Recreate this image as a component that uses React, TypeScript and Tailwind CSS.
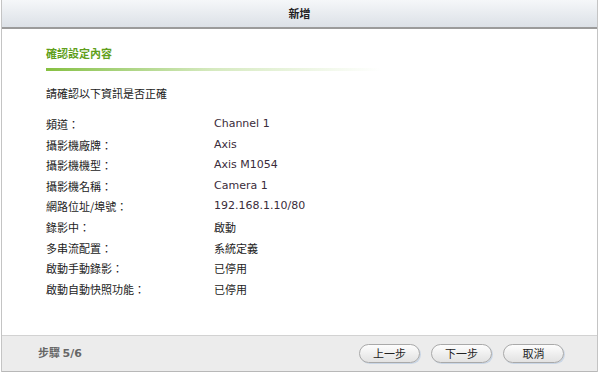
import React from "react";

const rows: [string, string, boolean][] = [
  ["頻道：", "Channel 1", true],
  ["攝影機廠牌：", "Axis", true],
  ["攝影機機型：", "Axis M1054", true],
  ["攝影機名稱：", "Camera 1", true],
  ["網路位址/埠號：", "192.168.1.10/80", true],
  ["錄影中：", "啟動", false],
  ["多串流配置：", "系統定義", false],
  ["啟動手動錄影：", "已停用", false],
  ["啟動自動快照功能：", "已停用", false],
];

const cjk = "font-['Noto_Sans_CJK_TC','Noto_Sans_CJK_SC',sans-serif]";

function PillButton({ label }: { label: string }) {
  return (
    <button
      className={`h-[19px] w-[61px] rounded-full border border-[#a9a9a9] bg-gradient-to-b from-[#fdfdfd] to-[#e2e2e2] text-[11px] leading-none text-[#222] shadow-[1px_1px_0_#c9d6e6] ${cjk}`}
    >
      {label}
    </button>
  );
}

export default function App() {
  return (
    <div className="w-[600px] h-[376px] bg-white overflow-hidden">
      <div className="ml-[1px] w-[597px] h-[372px] flex flex-col border-l border-r border-[#c4c4c4]">
        {/* Header */}
        <div className="h-[29px] shrink-0 flex items-center justify-center bg-gradient-to-b from-[#f5f7f9] to-[#dce1e7] border-b-2 border-[#9b9b9b]">
          <span className={`text-[11px] font-bold text-[#222] ${cjk}`}>新增</span>
        </div>

        {/* Body */}
        <div className="flex-1 bg-white pl-[44px] pt-[16px]">
          <div className={`text-[11px] font-bold leading-[16px] text-[#5f9f1c] ${cjk}`}>
            確認設定內容
          </div>
          <div className="mt-[7px] h-[3px] w-[335px] bg-gradient-to-r from-[#86c040] via-[#d6eac0] to-white" />
          <div className={`mt-[14px] text-[11px] leading-[16px] text-[#222] ${cjk}`}>
            請確認以下資訊是否正確
          </div>
          <div className="mt-[13px] flex flex-col">
            {rows.map(([label, value, latin]) => (
              <div key={label} className="flex h-[20.6px] items-center">
                <div className={`w-[168px] text-[11px] text-[#222] ${cjk}`}>{label}</div>
                <div
                  className={
                    latin
                      ? "text-[11px] text-[#3a2c3a] font-['DejaVu_Sans',sans-serif]"
                      : `text-[11px] text-[#222] ${cjk}`
                  }
                >
                  {value}
                </div>
              </div>
            ))}
          </div>
        </div>

        {/* Footer */}
        <div className="h-[37px] shrink-0 flex items-center bg-[#ececec] border-t border-[#d2d2d2] border-b border-b-[#b8b8b8] pl-[36px] pr-[33px]">
          <span className={`text-[11px] font-bold text-[#666] ${cjk}`}>
            步驟 <span className="font-['DejaVu_Sans',sans-serif]">5/6</span>
          </span>
          <div className="ml-auto flex items-center gap-[11px]">
            <PillButton label="上一步" />
            <PillButton label="下一步" />
            <PillButton label="取消" />
          </div>
        </div>
      </div>
    </div>
  );
}
